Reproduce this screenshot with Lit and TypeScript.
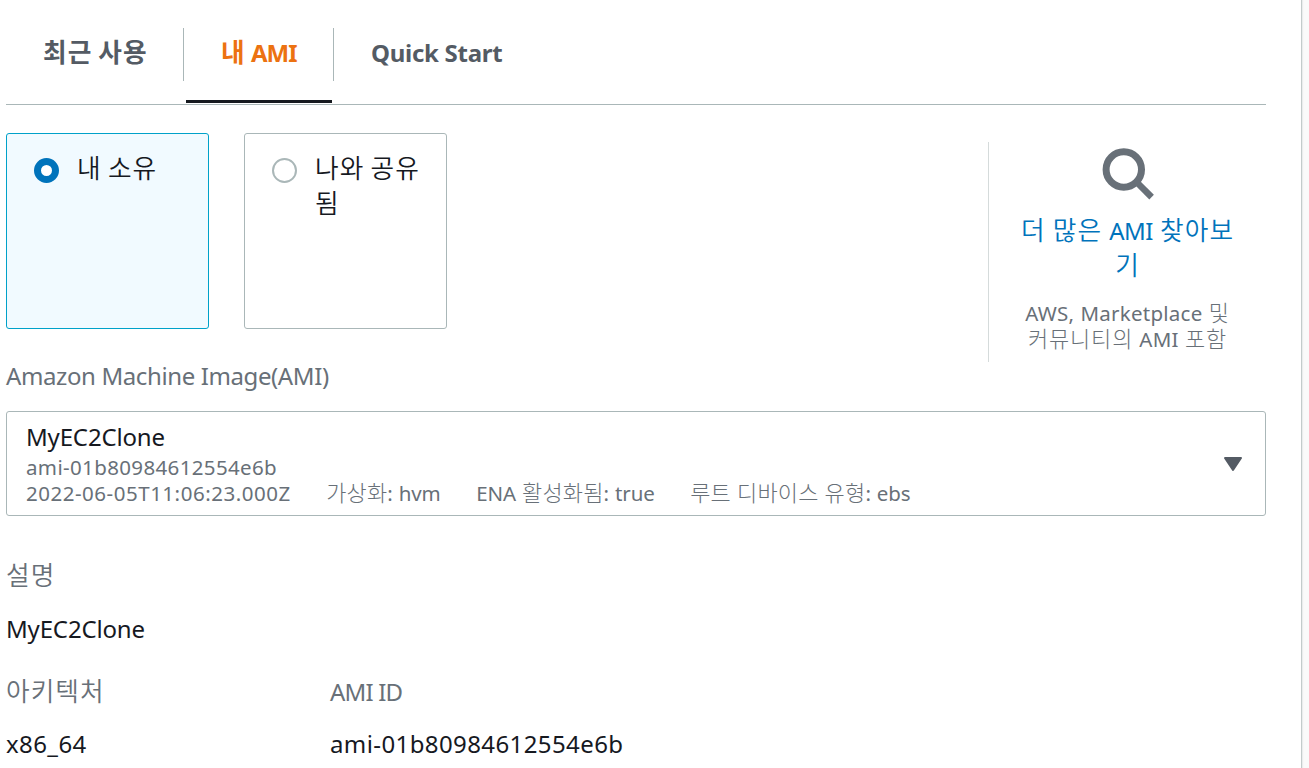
import { LitElement, css, html } from 'lit';
import { customElement, state } from 'lit/decorators.js';
import { classMap } from 'lit/directives/class-map.js';

// Hangul runs are set in their own face, slightly larger than the latin text.
const mixed = (text: string) =>
    text.split(/([\uac00-\ud7a3]+)/).filter(Boolean).map((part) =>
        /[\uac00-\ud7a3]/.test(part) ? html`<span class="ko">${part}</span>` : part
    );

@customElement('app-root')
export class AmiPicker extends LitElement {
    @state() tab = 1;
    @state() owner = 0;

    tabs = ['최근 사용', '내 AMI', 'Quick Start'];
    owners = ['내 소유', '나와 공유됨'];
    meta = ['가상화: hvm', 'ENA 활성화됨: true', '루트 디바이스 유형: ebs'];



    // STYLE

    static styles = css`
        :host {
            display: block;
            height: 768px;
            overflow: hidden;
            background: #fafafa;
            color: #16191f;
            font-family: "Noto Sans", "Noto Sans CJK KR", sans-serif;
            font-size: 24px;
            line-height: 35px;
        }

        * {
            box-sizing: border-box;
        }

        .ko {
            font-family: "Noto Sans CJK KR", sans-serif;
            font-size: 1.07em;
            font-weight: 350;
            letter-spacing: 0.04em;
            line-height: 1;
        }

        .panel {
            width: 1302px;
            height: 768px;
            padding: 0 35px 0 6px;
            background: #fff;
            border-right: 1px solid #c3cbcb;
            box-shadow: 1px 0 1px #eaeded;
        }

        .tabs {
            display: flex;
            height: 105px;
            padding-top: 28px;
            border-bottom: 1px solid #aab7b8;
        }
        .tab {
            height: 53px;
            padding: 0 37px;
            border-right: 1px solid #aab7b8;
            color: #545b64;
            font-weight: 700;
            letter-spacing: -0.28px;
            line-height: 50px;
            white-space: nowrap;
        }
        .tab:first-child {
            width: 178px;
        }
        .tab:nth-child(2) {
            width: 150px;
            letter-spacing: -1px;
        }
        .tab:last-child {
            border-right: 0;
        }
        .tab .ko {
            font-weight: 700;
        }
        .tab.active {
            color: #ec7211;
        }
        .tab.active::after {
            content: "";
            display: block;
            width: 146px;
            height: 3px;
            margin: 22px 0 0 -35px;
            background: #16191f;
        }

        .source {
            display: flex;
            align-items: flex-start;
            gap: 35px;
            height: 229px;
            padding-top: 28px;
        }
        .tile {
            display: flex;
            gap: 18px;
            width: 203px;
            height: 196px;
            padding: 17px 20px 17px 27px;
            border: 1px solid #aab7b8;
            border-radius: 3px;
        }
        .tile.checked {
            background: #f1faff;
            border-color: #00a1c9;
        }
        .radio {
            flex: none;
            width: 25px;
            height: 25px;
            margin-top: 7px;
            border: 2px solid #aab7b8;
            border-radius: 50%;
            background: #fff;
        }
        .checked .radio {
            border: 7px solid #0073bb;
        }
        .tile-label {
            width: 110px;
            word-break: break-all;
        }

        .browse {
            display: flex;
            flex-direction: column;
            align-items: center;
            width: 278px;
            height: 220px;
            margin: 9px 0 0 auto;
            padding-top: 5px;
            border-left: 1px solid #d5dbdb;
            text-align: center;
        }
        .search {
            width: 54px;
            height: 54px;
        }
        .browse-link {
            width: 226px;
            margin-top: 12px;
            color: #0073bb;
            letter-spacing: -0.5px;
            word-spacing: 1.4px;
            word-break: break-all;
        }
        .browse-note {
            margin-top: 17px;
            color: #687078;
            font-size: 20.5px;
            letter-spacing: 0.25px;
            line-height: 26px;
            word-spacing: 0.6px;
        }
        .browse-note .ko {
            font-weight: 300;
        }

        .label {
            color: #687078;
        }
        .select-label {
            margin-top: 24px;
            letter-spacing: -0.39px;
        }
        .name {
            letter-spacing: -0.16px;
        }
        .id {
            letter-spacing: 0.4px;
        }

        .select {
            display: flex;
            align-items: center;
            justify-content: space-between;
            height: 105px;
            margin-top: 18px;
            padding: 0 22px 2px 19px;
            border: 1px solid #aab7b8;
            border-radius: 3px;
        }
        .option-meta {
            display: flex;
            gap: 35.5px;
            color: #687078;
            font-size: 20.5px;
            line-height: 26px;
            white-space: nowrap;
        }
        .option-meta .ko {
            font-weight: 300;
            letter-spacing: 0.01em;
        }
        .option-meta .item {
            letter-spacing: -0.1px;
            word-spacing: 0.8px;
        }
        .option-meta .id {
            letter-spacing: 0.36px;
        }
        .created {
            letter-spacing: 0.52px;
        }
        .arrow {
            width: 20px;
            height: 16px;
            margin-top: 2px;
        }

        .details {
            display: grid;
            grid-template-columns: 324px 1fr;
            row-gap: 28px;
            margin-top: 42px;
        }
        .wide {
            grid-column: 1 / -1;
        }
        .value {
            margin-top: 17px;
        }
        .wide .value {
            margin-top: 18px;
        }
        .short {
            letter-spacing: -0.8px;
        }
    `;



    // MARKUP

    render() {
        return html`
            <main class="panel">
                <nav class="tabs">
                    ${this.tabs.map((name, i) => html`
                        <a class=${classMap({ tab: true, active: i === this.tab })} @click=${() => (this.tab = i)}>${mixed(name)}</a>
                    `)}
                </nav>

                <section class="source">
                    ${this.owners.map((name, i) => html`
                        <div class=${classMap({ tile: true, checked: i === this.owner })} @click=${() => (this.owner = i)}>
                            <span class="radio"></span>
                            <span class="tile-label">${mixed(name)}</span>
                        </div>
                    `)}

                    <aside class="browse">
                        <svg class="search" viewBox="0 0 54 54" fill="none" stroke="#687078">
                            <circle cx="22.8" cy="22.5" r="17.7" stroke-width="7"></circle>
                            <path d="M35 34.500 50.600 50.100" stroke-width="6.500"></path>
                        </svg>
                        <a class="browse-link">${mixed('더 많은 AMI 찾아보기')}</a>
                        <div class="browse-note">${mixed('AWS, Marketplace 및')}<br>${mixed('커뮤니티의 AMI 포함')}</div>
                    </aside>
                </section>

                <div class="label select-label">Amazon Machine Image(AMI)</div>
                <div class="select">
                    <div>
                        <div class="name">MyEC2Clone</div>
                        <div class="option-meta"><span class="id">ami-01b80984612554e6b</span></div>
                        <div class="option-meta">
                            <span class="created">2022-06-05T11:06:23.000Z</span>
                            ${this.meta.map((item) => html`<span class="item">${mixed(item)}</span>`)}
                        </div>
                    </div>
                    <svg class="arrow" viewBox="0 0 20 16" fill="#545b64" stroke="#545b64" stroke-width="2" stroke-linejoin="round">
                        <path d="M2 2H18L10 14Z"></path>
                    </svg>
                </div>

                <section class="details">
                    <div class="wide">
                        <div class="label">${mixed('설명')}</div>
                        <div class="value name">MyEC2Clone</div>
                    </div>
                    <div>
                        <div class="label">${mixed('아키텍처')}</div>
                        <div class="value id">x86_64</div>
                    </div>
                    <div>
                        <div class="label short">AMI ID</div>
                        <div class="value id">ami-01b80984612554e6b</div>
                    </div>
                </section>
            </main>
        `;
    }
}
